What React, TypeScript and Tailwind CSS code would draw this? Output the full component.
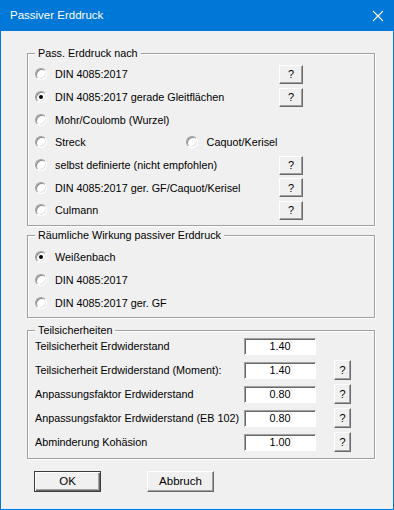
import React from 'react';

const font = { fontFamily: '"Liberation Sans", Arial, sans-serif' };

const Radio: React.FC<{ checked?: boolean }> = ({ checked }) => (
  <span className="relative flex h-[12px] w-[12px] shrink-0 items-center justify-center rounded-full border border-t-[#a0a0a0] border-l-[#a0a0a0] border-b-white border-r-white bg-white shadow-[inset_1px_1px_0_#8a8a8a,inset_-1px_-1px_0_#e3e3e3]">
    {checked && <span className="h-[4px] w-[4px] rounded-full bg-black" />}
  </span>
);

const HelpButton: React.FC<{ wide?: boolean }> = ({ wide }) => (
  <button
    className={
      wide
        ? 'flex h-[19px] w-[24px] items-center justify-center border border-t-white border-l-white border-b-[#696969] border-r-[#696969] bg-[#f0f0f0] text-[11px] text-black shadow-[inset_-1px_-1px_0_#a0a0a0]'
        : 'flex h-[20px] w-[17px] items-center justify-center border border-t-white border-l-white border-b-[#696969] border-r-[#696969] bg-[#f0f0f0] text-[11px] text-black shadow-[inset_-1px_-1px_0_#a0a0a0]'
    }
  >
    ?
  </button>
);

const Group: React.FC<{ title: string; className: string; children: React.ReactNode }> = ({ title, className, children }) => (
  <div className={'relative ml-[26px] w-[348px] border border-[#a0a0a0] shadow-[1px_1px_0_#fff,inset_1px_1px_0_#fff] ' + className}>
    <span className="absolute left-[7px] top-[-8px] bg-[#f0f0f0] px-[3px] text-[10.8px] leading-[14px] text-black">{title}</span>
    {children}
  </div>
);

interface Option {
  label: string;
  help?: boolean;
  checked?: boolean;
}

const methods: Option[] = [
  { label: 'DIN 4085:2017', help: true },
  { label: 'DIN 4085:2017 gerade Gleitflächen', help: true, checked: true },
  { label: 'Mohr/Coulomb (Wurzel)' },
  { label: 'Streck' },
  { label: 'selbst definierte (nicht empfohlen)', help: true },
  { label: 'DIN 4085:2017 ger. GF/Caquot/Kerisel', help: true },
  { label: 'Culmann', help: true },
];

const spatial: Option[] = [
  { label: 'Weißenbach', checked: true },
  { label: 'DIN 4085:2017' },
  { label: 'DIN 4085:2017 ger. GF' },
];

const factors = [
  { label: 'Teilsicherheit Erdwiderstand', value: '1.40', help: false },
  { label: 'Teilsicherheit Erdwiderstand (Moment):', value: '1.40', help: true },
  { label: 'Anpassungsfaktor Erdwiderstand', value: '0.80', help: true },
  { label: 'Anpassungsfaktor Erdwiderstand (EB 102)', value: '0.80', help: true },
  { label: 'Abminderung Kohäsion', value: '1.00', help: true },
];

export default function App() {
  return (
    <div className="h-[510px] w-[394px] overflow-hidden bg-[#0078d7]" style={font}>
      <div className="flex h-[31px] items-center justify-between pl-[10px] pr-[8px] text-white">
        <span className="text-[11.5px]">Passiver Erddruck</span>
        <svg width="12" height="12" viewBox="0 0 12 12" className="mr-[2px] mt-[1px]">
          <path d="M1 1 L11 11 M11 1 L1 11" stroke="#fff" strokeWidth="1.1" />
        </svg>
      </div>
      <div className="mx-[1px] h-[478px] bg-[#f0f0f0] pt-[22px] text-[10.8px] text-black">
        <Group title="Pass. Erddruck nach" className="h-[173px] pt-[9px]">
          {methods.map((m) => (
            <div key={m.label} className="flex h-[22.7px] items-center pl-[7px]">
              <div className="flex w-[244px] items-center">
                <Radio checked={m.checked} />
                <span className="ml-[8px]">{m.label}</span>
                {m.label === 'Streck' && (
                  <span className="ml-[100px] flex items-center">
                    <Radio />
                    <span className="ml-[9px]">Caquot/Kerisel</span>
                  </span>
                )}
              </div>
              {m.help && <HelpButton wide />}
            </div>
          ))}
        </Group>

        <Group title="Räumliche Wirkung passiver Erddruck" className="mt-[9px] h-[83px] pt-[10px]">
          {spatial.map((s) => (
            <div key={s.label} className="flex h-[22.7px] items-center pl-[7px]">
              <Radio checked={s.checked} />
              <span className="ml-[8px]">{s.label}</span>
            </div>
          ))}
        </Group>

        <Group title="Teilsicherheiten" className="mt-[12px] h-[129px] pt-[3px]">
          {factors.map((f) => (
            <div key={f.label} className="flex h-[24px] items-center pl-[7px]">
              <span className="w-[209px]">{f.label}</span>
              <div className="flex h-[17px] w-[72px] items-center justify-center border border-t-[#a0a0a0] border-l-[#a0a0a0] border-b-white border-r-white bg-white shadow-[inset_1px_1px_0_#696969]">
                {f.value}
              </div>
              {f.help && (
                <div className="ml-[18px]">
                  <HelpButton />
                </div>
              )}
            </div>
          ))}
        </Group>

        <div className="ml-[33px] mt-[12px] flex gap-[46px]">
          <button className="flex h-[21px] w-[67px] items-center justify-center border border-[#3c3c3c] bg-[#f0f0f0] shadow-[inset_1px_1px_0_#fff,inset_-1px_-1px_0_#696969,inset_-2px_-2px_0_#a0a0a0] text-[11.5px]">
            OK
          </button>
          <button className="flex h-[21px] w-[67px] items-center justify-center border border-t-white border-l-white border-b-[#696969] border-r-[#696969] bg-[#f0f0f0] shadow-[inset_-1px_-1px_0_#a0a0a0] text-[11.5px]">
            Abbruch
          </button>
        </div>
      </div>
    </div>
  );
}
